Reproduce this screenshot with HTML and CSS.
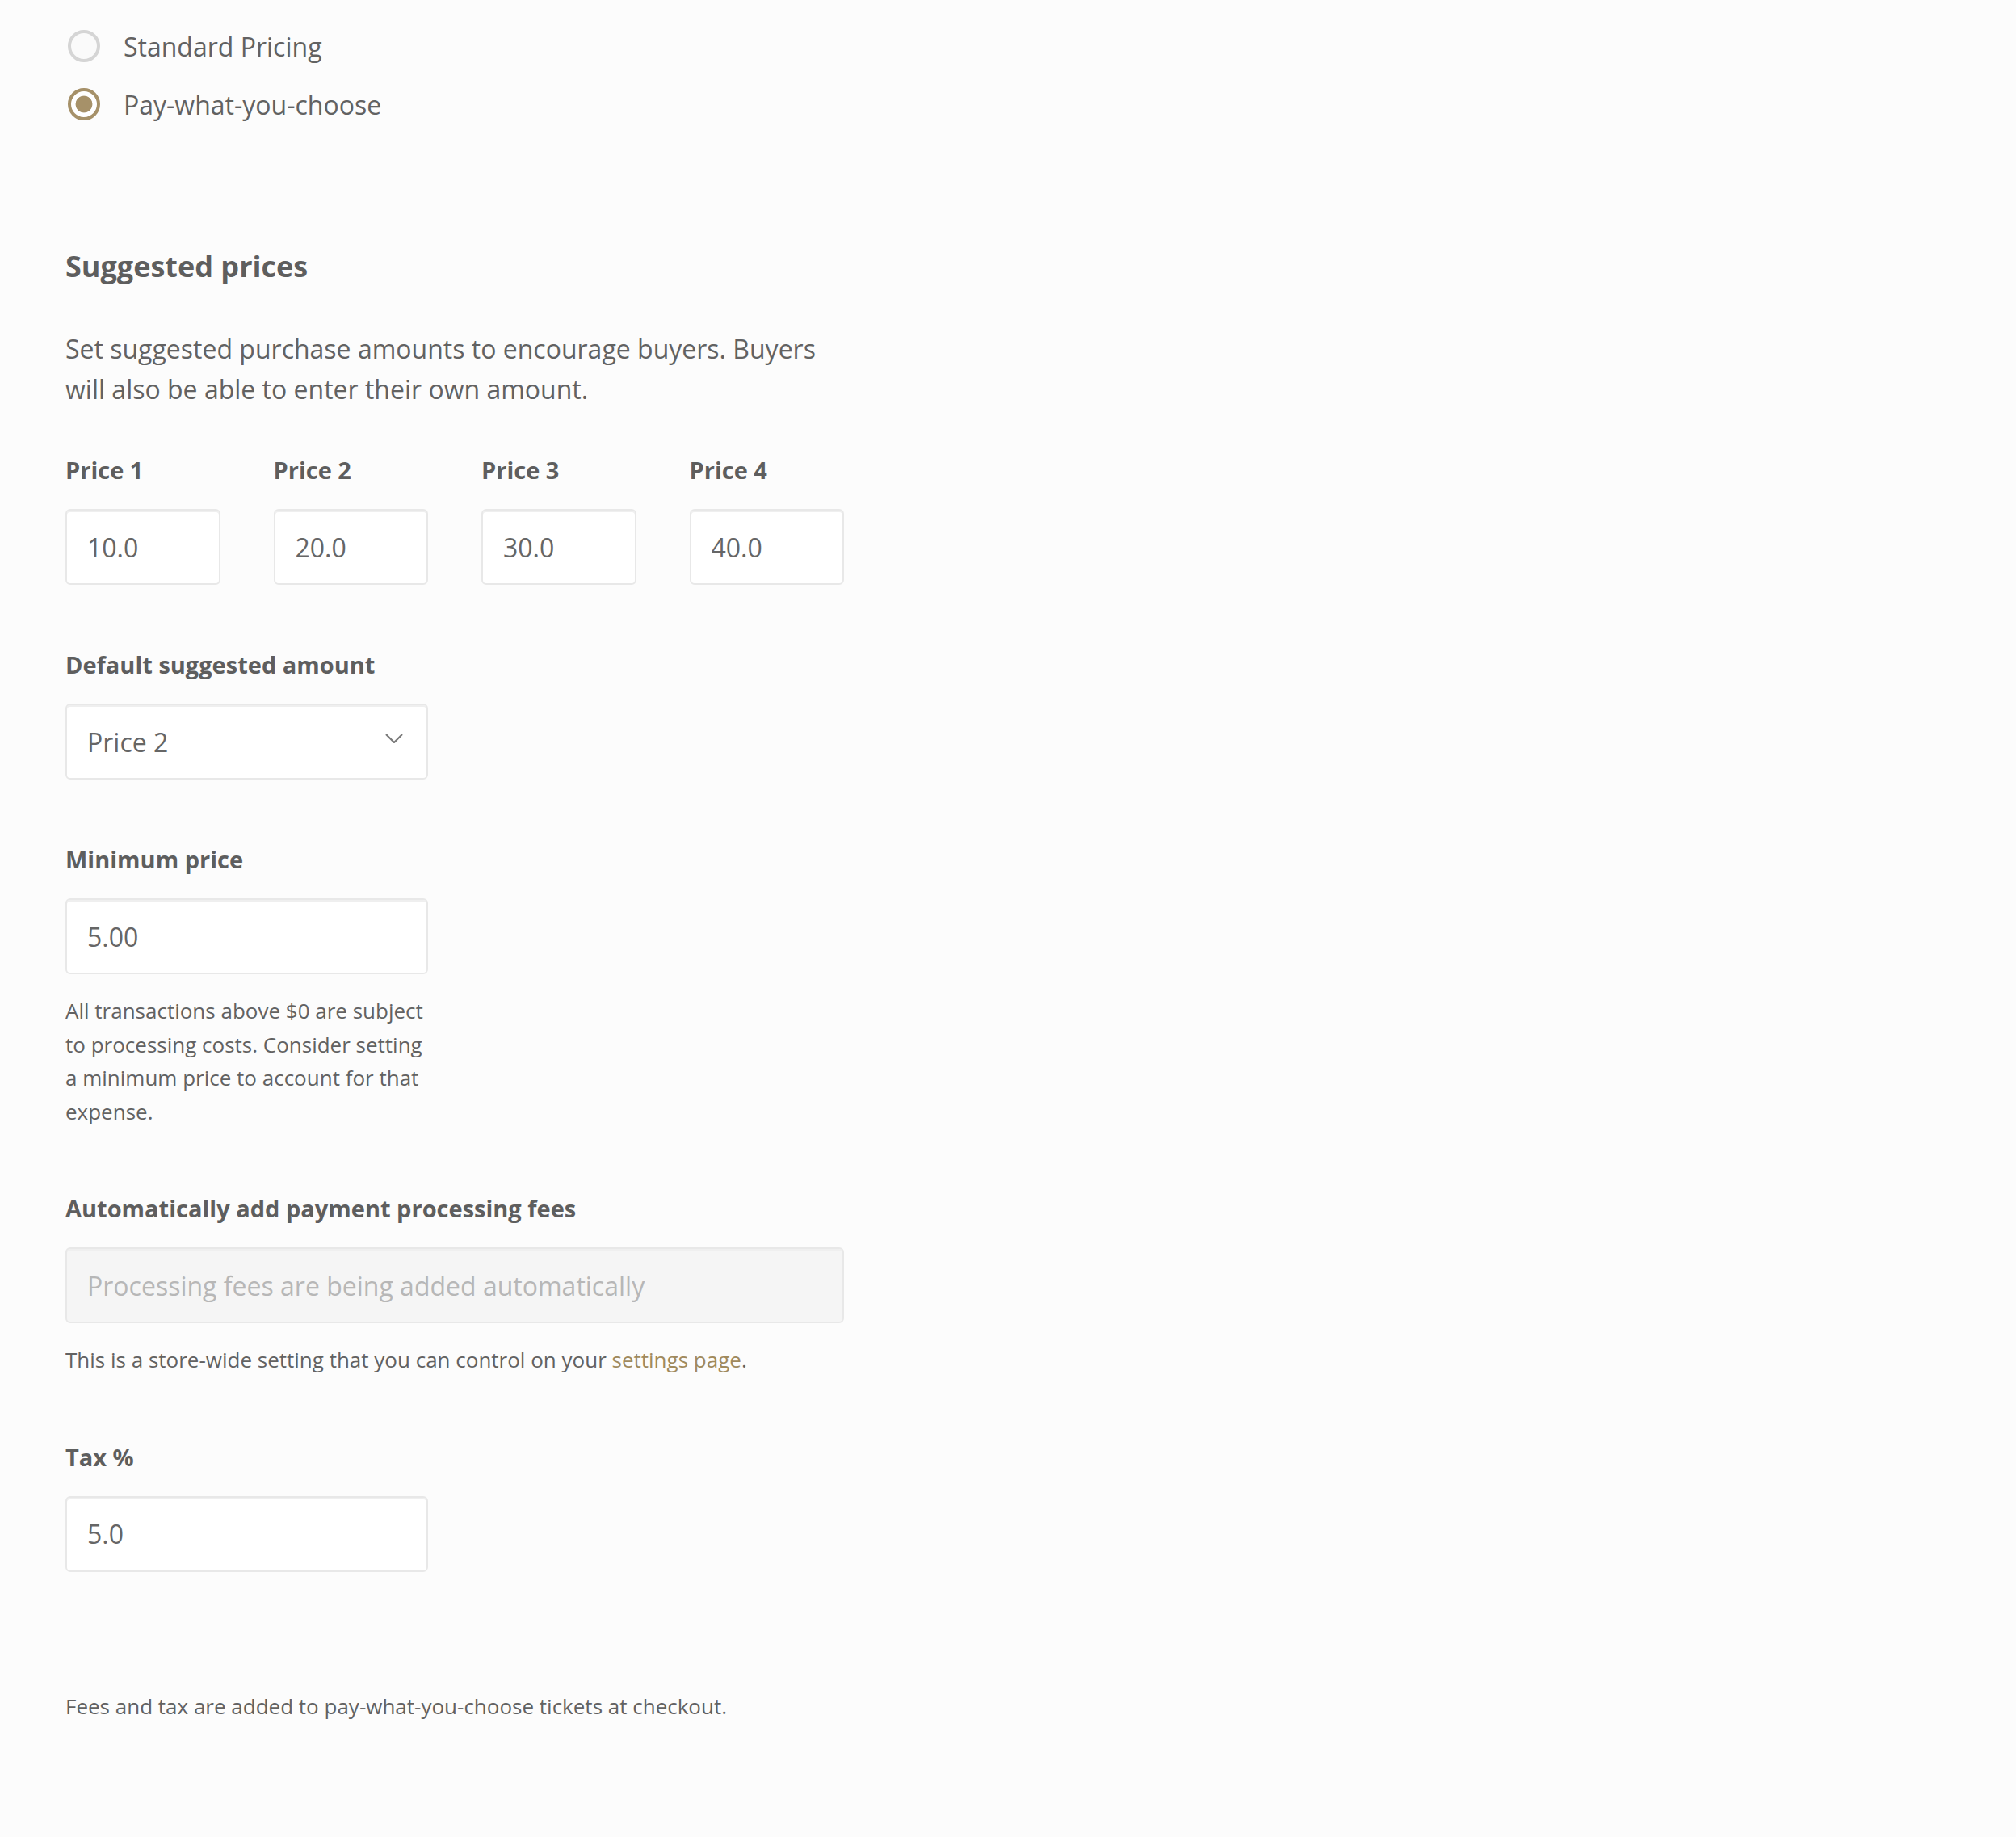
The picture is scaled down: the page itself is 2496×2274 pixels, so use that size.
FILE: index.html
```html
<!DOCTYPE html>
<html lang="en">
<head>
<meta charset="utf-8">
<title>Pricing</title>
<link rel="stylesheet" href="styles.css">
</head>
<body>
<main class="page">
  <div class="radio-list">
    <label class="radio"><span class="radio-dot"></span><span>Standard Pricing</span></label>
    <label class="radio"><span class="radio-dot checked"></span><span>Pay-what-you-choose</span></label>
  </div>

  <h2 class="section-title">Suggested prices</h2>
  <p class="intro">Set suggested purchase amounts to encourage buyers. Buyers will also be able to enter their own amount.</p>

  <div class="price-grid">
    <div class="price-col">
      <label class="label">Price 1</label>
      <input class="input" type="text" value="10.0">
    </div>
    <div class="price-col">
      <label class="label">Price 2</label>
      <input class="input" type="text" value="20.0">
    </div>
    <div class="price-col">
      <label class="label">Price 3</label>
      <input class="input" type="text" value="30.0">
    </div>
    <div class="price-col">
      <label class="label">Price 4</label>
      <input class="input" type="text" value="40.0">
    </div>
  </div>

  <div class="field field-half">
    <label class="label">Default suggested amount</label>
    <div class="select">
      <span class="select-value">Price 2</span>
      <svg class="chevron" width="22" height="12" viewBox="0 0 22 12"><polyline points="1,1 11,11 21,1" fill="none" stroke="#7a7a7a" stroke-width="2.2"/></svg>
    </div>
  </div>

  <div class="field field-half">
    <label class="label">Minimum price</label>
    <input class="input" type="text" value="5.00">
    <p class="help">All transactions above $0 are subject to processing costs. Consider setting a minimum price to account for that expense.</p>
  </div>

  <div class="field">
    <label class="label">Automatically add payment processing fees</label>
    <input class="input input-disabled" type="text" placeholder="Processing fees are being added automatically" disabled>
    <p class="help">This is a store-wide setting that you can control on your <a class="link" href="#">settings page</a>.</p>
  </div>

  <div class="field field-half">
    <label class="label">Tax %</label>
    <input class="input" type="text" value="5.0">
  </div>

  <p class="footnote">Fees and tax are added to pay-what-you-choose tickets at checkout.</p>
</main>
</body>
</html>
```

FILE: styles.css
```css
html, body {
  margin: 0;
  background: #fcfcfc;
}

body {
  font-family: "Open Sans", "Liberation Sans", sans-serif;
  color: #626262;
}

.page {
  width: 964px;
  padding: 33px 0 200px 81px;
}

.radio-list {
  display: flex;
  flex-direction: column;
  gap: 24px;
}

.radio {
  display: flex;
  align-items: center;
  height: 48px;
  font-size: 32px;
  color: #626262;
}

.radio-dot {
  box-sizing: border-box;
  width: 40px;
  height: 40px;
  margin-left: 3px;
  margin-right: 29px;
  border: 4px solid #d5d5d5;
  border-radius: 50%;
  background: #fafafa;
  flex: none;
}

.radio-dot.checked {
  border-color: #a69169;
  background: radial-gradient(circle, #a69169 0 10px, #ffffff 10.8px);
}

.section-title {
  margin: 153px 0 0;
  font-size: 36px;
  line-height: 48px;
  font-weight: 700;
  color: #5e5e5e;
}

.intro {
  margin: 53px 0 0;
  font-size: 32px;
  line-height: 50px;
}

.price-grid {
  margin-top: 55px;
  display: grid;
  grid-template-columns: repeat(4, 1fr);
  column-gap: 66px;
}

.label {
  display: block;
  font-size: 29px;
  line-height: 40px;
  font-weight: 700;
  color: #5e5e5e;
  margin-bottom: 28px;
}

.field {
  margin-top: 79px;
}

.field-half {
  width: 449px;
}

.input,
.select {
  box-sizing: border-box;
  display: block;
  width: 100%;
  height: 94px;
  margin: 0;
  padding: 0 25px;
  border: 2px solid #e8e8e8;
  border-radius: 6px;
  box-shadow: inset 0 2px 0 #efefef;
  background: #ffffff;
  font-family: "Open Sans", "Liberation Sans", sans-serif;
  font-size: 32px;
  color: #666666;
  outline: none;
}

.input-disabled {
  background: #f5f5f5;
}

.input-disabled::placeholder {
  color: #b7b7b7;
  opacity: 1;
}

.select {
  position: relative;
  display: flex;
  align-items: center;
}

.chevron {
  position: absolute;
  right: 29px;
  top: 35px;
}

.help {
  margin: 25px 0 0;
  font-size: 26px;
  line-height: 41.6px;
}

.link {
  color: #a08a5d;
  text-decoration: none;
}

.footnote {
  margin: 146px 0 0;
  font-size: 26px;
  line-height: 41.6px;
}
```
